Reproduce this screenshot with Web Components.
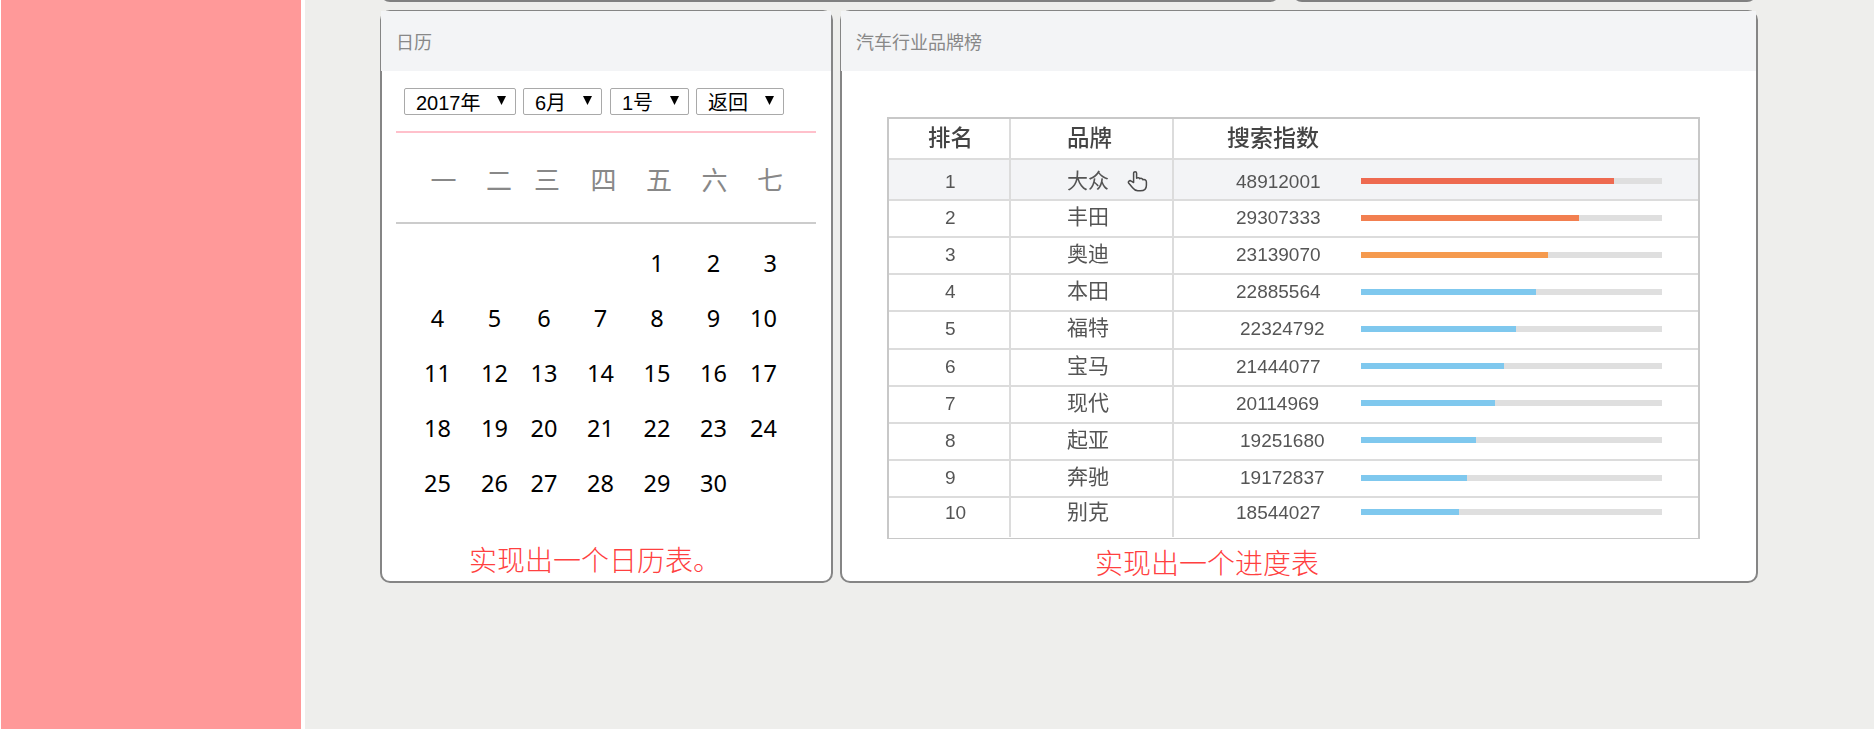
<!DOCTYPE html>
<html lang="zh">
<head>
<meta charset="utf-8">
<title>日历</title>
<style>
html, body { margin: 0; height: 100%; background: #fff; overflow: hidden; }
body { font-family: "Noto Sans CJK SC", "Liberation Sans", sans-serif; }
</style>
</head>
<body>
<app-shell>
  <stub-card slot="stubs" style="width:900px"></stub-card>
  <stub-card slot="stubs" style="width:465px"></stub-card>

  <panel-card slot="panels" title="日历" style="width:453px">
    <calendar-panel></calendar-panel>
    <note-text indent="87" size="28" top="33">实现出一个日历表。</note-text>
  </panel-card>

  <panel-card slot="panels" title="汽车行业品牌榜" style="width:918px">
    <rank-chart></rank-chart>
    <note-text indent="253" size="28" top="8">实现出一个进度表</note-text>
  </panel-card>
</app-shell>

<script>
// page frame: pink side bar on the left, grey work area with the cards
class AppShell extends HTMLElement {
  constructor() {
    super();
    this.attachShadow({ mode: "open" });
    this.shadowRoot.innerHTML = `
<style>
:host { display: flex; height: 729px; padding-left: 1px; box-sizing: border-box; }
.side { width: 300px; background: #ff9999; flex: none; }
.main { flex: 1; margin-left: 4px; background: #eeeeec; padding: 0 115px 0 75px; overflow: hidden; }
.stubs { display: flex; gap: 12px; height: 2px; }
.panels { display: flex; gap: 7px; margin-top: 8px; }
</style>
<div class="side"></div>
<div class="main">
  <div class="stubs"><slot name="stubs"></slot></div>
  <div class="panels"><slot name="panels"></slot></div>
</div>`;
  }
}

// only the lower edge of these cards is left on screen
class StubCard extends HTMLElement {
  constructor() {
    super();
    this.attachShadow({ mode: "open" });
    this.shadowRoot.innerHTML = `
<style>
:host { display: flex; align-items: flex-end; height: 2px; overflow: hidden; flex: none; }
div { width: 100%; height: 40px; flex: none; box-sizing: border-box; border: 2px solid #808080; border-radius: 10px; background: #fff; }
</style>
<div></div>`;
  }
}

class PanelCard extends HTMLElement {
  constructor() {
    super();
    this.attachShadow({ mode: "open" });
    this.shadowRoot.innerHTML = `
<style>
:host { display: block; flex: none; height: 573px; box-sizing: border-box; background: #fff; border: 2px solid #858585; border-top-width: 1px; border-radius: 10px; }
.head { height: 60px; margin-left: -1px; background: #f3f4f6; padding-left: 15px; line-height: 60px; font-size: 18px; color: #888; }
</style>
<div class="head"></div>
<slot></slot>`;
    this.shadowRoot.querySelector(".head").textContent = this.getAttribute("title");
  }
}

class CalSelect extends HTMLElement {
  constructor() {
    super();
    this.attachShadow({ mode: "open" });
    this.shadowRoot.innerHTML = `
<style>
:host { display: block; position: relative; height: 27px; flex: none; }
select { appearance: none; -webkit-appearance: none; display: block; width: 100%; height: 27px; margin: 0; padding: 4px 0 0 11px; box-sizing: border-box;
  border: 1px solid #a9a9a9; border-radius: 2px; background: #fff; color: #000; font: 20px/21px "Liberation Sans", "Noto Sans CJK SC", sans-serif; outline: none; }
svg { position: absolute; right: 10px; top: 8px; pointer-events: none; }
</style>
<select></select>
<svg width="9" height="9" viewBox="0 0 9 9"><path d="M0 0H9L4.5 9Z" fill="#000"/></svg>`;
    let s = this.shadowRoot.querySelector("select");
    s.setAttribute("aria-label", this.getAttribute("label"));
    for (let t of this.getAttribute("options").split(",")) {
      let o = document.createElement("option");
      o.textContent = t;
      o.selected = t == this.getAttribute("value");
      s.appendChild(o);
    }
  }
}

class CalendarPanel extends HTMLElement {
  constructor() {
    super();
    this.attachShadow({ mode: "open" });
    this.shadowRoot.innerHTML = `
<style>
:host { display: block; padding: 17px 15px 0 14px; }
.tools { display: flex; margin-left: 8px; height: 27px; }
.pink { height: 2px; background: #ffc0cb; margin-top: 16px; }
.week { display: grid; grid-template-columns: 55px 56px 40px 73px 38px 73px 38px; padding-left: 20px; height: 89px; align-items: center; text-align: center; font-size: 26px; color: #888; }
.week span { position: relative; top: 1px; }
.grey { height: 2px; background: #ccc; }
.days { display: grid; grid-template-columns: 57px 57px 42px 71px 42px 71px 28px; grid-auto-rows: 55px; padding: 12px 0 0 13px; align-items: center; text-align: center; font-family: "Noto Sans", sans-serif; font-size: 23.5px; line-height: 55px; color: #000; }
.days span:nth-child(7n) { text-align: right; white-space: nowrap; }
</style>
<div class="tools">
  <cal-select label="年" options="2016年,2017年,2018年" value="2017年" style="width:112px;margin-right:7px"></cal-select>
  <cal-select label="月" options="5月,6月,7月" value="6月" style="width:79px;margin-right:8px"></cal-select>
  <cal-select label="日" options="1号,2号,3号" value="1号" style="width:79px;margin-right:7px"></cal-select>
  <cal-select label="操作" options="返回" value="返回" style="width:88px"></cal-select>
</div>
<div class="pink"></div>
<div class="week"></div>
<div class="grey"></div>
<div class="days"></div>`;
    let week = this.shadowRoot.querySelector(".week");
    for (let t of "一二三四五六七") {
      let d = document.createElement("span");
      d.textContent = t;
      week.appendChild(d);
    }
    // four empty cells before the 1st, as in the table this copies
    let days = this.shadowRoot.querySelector(".days");
    for (let i = -3; i <= 30; i++) {
      let d = document.createElement("span");
      d.textContent = i > 0 ? i : "";
      days.appendChild(d);
    }
  }
}

const hand = `<svg width="21" height="22" viewBox="0 0 21 22" fill="none" stroke="#4a4a4a" stroke-width="1.5" stroke-linejoin="round" stroke-linecap="round">
<path d="M6.6 12.5V3.2C6.6 1.3 9.6 1.3 9.6 3.2V8.2C10.6 7.4 12.4 7.6 12.8 8.7C13.8 8 15.6 8.4 15.8 9.7C17 9.2 19.4 9.7 19.4 12V15.2C19.4 18.6 17 20.8 13.4 20.8H10.8C8.2 20.8 7 19.6 5.6 17.8L1.8 13.2C0.6 11.6 2.8 9.8 4.2 11.2Z"/>
</svg>`;

class RankRow extends HTMLElement {
  // createElement gives no attributes yet, so the markup waits for connect
  connectedCallback() {
    if (this.shadowRoot) return;
    this.attachShadow({ mode: "open" });
    let fill = this.getAttribute("fill");
    let colour = this.getAttribute("colour");
    this.shadowRoot.innerHTML = `
<style>
:host { display: grid; grid-template-columns: 120px 2px 161px 2px 1fr; box-sizing: border-box; padding-bottom: 2px; border-bottom: 2px solid #dcdcdc; color: #555; font-size: 19px; line-height: 19px; }
:host([active]) { background: #f3f4f6; padding: 3px 0 0; }
:host([last]) { border-bottom: 0; padding-bottom: 9px; }
.c { display: flex; align-items: center; }
.line { background: #dcdcdc; margin-bottom: -2px; }
:host([active]) .line { margin: -3px 0 0; }
:host([last]) .line { margin-bottom: -11px; }
.rank { padding-left: 56px; font-family: "Liberation Sans", sans-serif; }
.name { padding-left: 56px; font-size: 21px; gap: 18px; }
.name span { margin-bottom: 4px; }
.score { padding-left: ${this.getAttribute("shift") ? 66 : 62}px; width: 187px; flex: none; box-sizing: border-box; font-family: "Liberation Sans", sans-serif; }
.track { width: 301px; height: 6px; background: #dfdfdf; flex: none; }
.fill { height: 6px; width: ${fill}px; background: ${colour}; }
</style>
<div class="c rank"></div>
<div class="line"></div>
<div class="c name"><span></span>${this.hasAttribute("active") ? hand : ""}</div>
<div class="line"></div>
<div class="c"><span class="score"></span><div class="track"><div class="fill"></div></div></div>`;
    this.shadowRoot.querySelector(".rank").textContent = this.getAttribute("rank");
    this.shadowRoot.querySelector(".name span").textContent = this.getAttribute("name");
    this.shadowRoot.querySelector(".score").textContent = this.getAttribute("score");
  }
}

class RankChart extends HTMLElement {
  constructor() {
    super();
    this.attachShadow({ mode: "open" });
    this.shadowRoot.innerHTML = `
<style>
:host { display: block; width: 813px; height: 422px; margin: 46px 0 0 45px; box-sizing: border-box; border: solid #c8c8c8; border-width: 2px 2px 1px 2px; filter: blur(0.55px); background: #fff; }
.head { display: grid; grid-template-columns: 120px 2px 161px 2px 1fr; height: 39px; border-bottom: 2px solid #dcdcdc; font-size: 22.5px; font-weight: 500; color: #444; }
.head span { display: flex; align-items: center; padding-bottom: 11px; }
.head .line { background: #dcdcdc; padding: 0; }
rank-row { height: 37.15px; }
rank-row[active] { height: 41px; }
rank-row[last] { height: 37px; }
</style>
<div class="head">
  <span style="padding-left:39px">排名</span><span class="line"></span>
  <span style="padding-left:56px">品牌</span><span class="line"></span>
  <span style="padding-left:53px;font-size:23px">搜索指数</span>
</div>
<div class="rows"></div>`;
    const hot = ["#ee6a50", "#f27f50", "#f59a4e"];
    const rows = [
      ["大众", "48912001", 253], ["丰田", "29307333", 218], ["奥迪", "23139070", 187],
      ["本田", "22885564", 175], ["福特", "22324792", 155, 1], ["宝马", "21444077", 143],
      ["现代", "20114969", 134], ["起亚", "19251680", 115, 1], ["奔驰", "19172837", 106, 1],
      ["别克", "18544027", 98],
    ];
    let box = this.shadowRoot.querySelector(".rows");
    rows.forEach((r, i) => {
      let row = document.createElement("rank-row");
      row.setAttribute("rank", i + 1);
      row.setAttribute("name", r[0]);
      row.setAttribute("score", r[1]);
      row.setAttribute("fill", r[2]);
      row.setAttribute("colour", hot[i] || "#7fc8ee");
      if (r[3]) row.setAttribute("shift", "1");
      if (i == 0) row.setAttribute("active", "");
      if (i == rows.length - 1) row.setAttribute("last", "");
      box.appendChild(row);
    });
  }
}

class NoteText extends HTMLElement {
  constructor() {
    super();
    this.attachShadow({ mode: "open" });
    this.shadowRoot.innerHTML = `
<style>
:host { display: block; color: #ff4040; font-family: "Liberation Serif", "Noto Sans CJK SC", serif; font-weight: 300; line-height: 36px; white-space: nowrap; }
</style>
<slot></slot>`;
    this.style.paddingLeft = this.getAttribute("indent") + "px";
    this.style.paddingTop = this.getAttribute("top") + "px";
    this.style.fontSize = this.getAttribute("size") + "px";
  }
}

customElements.define("cal-select", CalSelect);
customElements.define("calendar-panel", CalendarPanel);
customElements.define("rank-row", RankRow);
customElements.define("rank-chart", RankChart);
customElements.define("note-text", NoteText);
customElements.define("stub-card", StubCard);
customElements.define("panel-card", PanelCard);
customElements.define("app-shell", AppShell);
</script>
</body>
</html>
